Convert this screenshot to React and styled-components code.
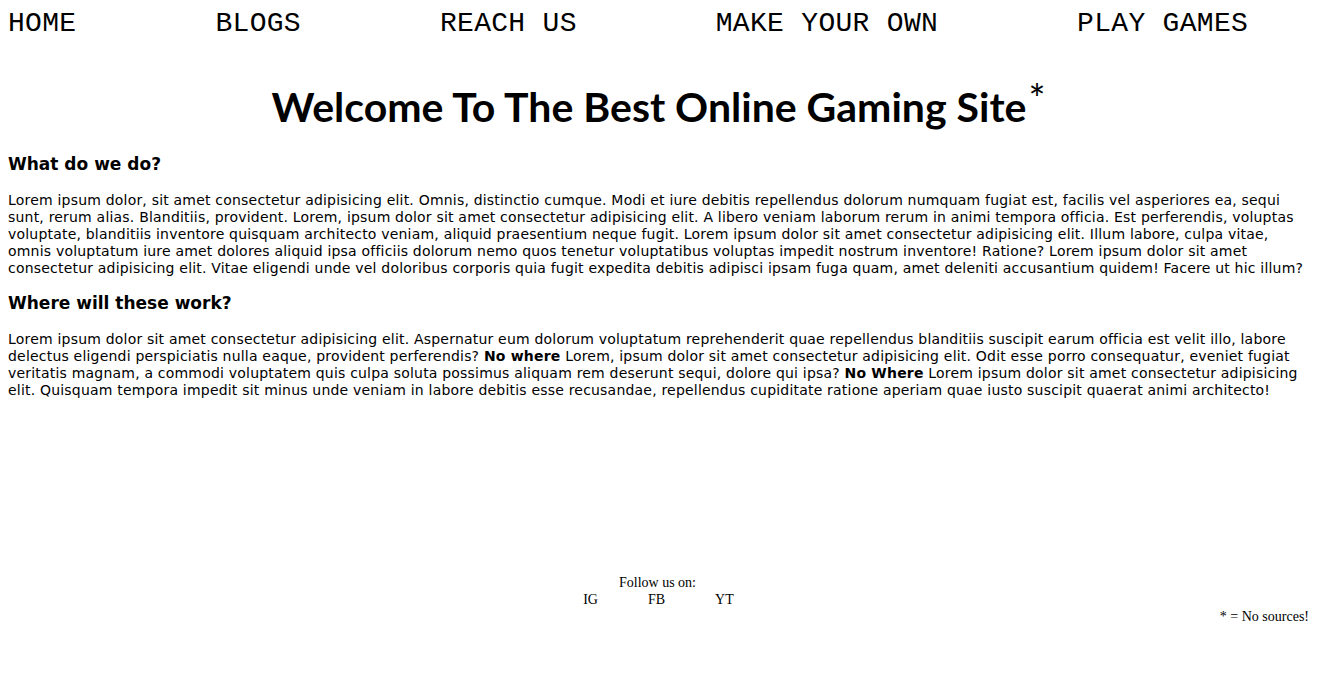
import React from "react";
import styled, { createGlobalStyle } from "styled-components";

const GlobalStyle = createGlobalStyle`
  body {
    margin: 8px;
    background: #fff;
    color: #000;
    font-family: "Liberation Serif", "Times New Roman", serif;
    font-size: 14px;
  }
`;

const Nav = styled.nav`
  display: flex;
  gap: 139px;
  margin-top: 2px;
`;

const NavLink = styled.a`
  font-family: "Liberation Mono", "Courier New", monospace;
  font-size: 28px;
  letter-spacing: 0.3px;
  color: #000;
  text-decoration: none;
  line-height: 28px;
`;

const Title = styled.h1`
  font-family: Lato, "Open Sans", sans-serif;
  font-weight: 700;
  font-size: 41px;
  text-align: center;
  margin: 45px 0 23px;
  line-height: 48px;

  sup {
    font-size: 40px;
    font-weight: 400;
    line-height: 0;
    margin-left: 2px;
    position: relative;
    top: 7px;
  }
`;

const Section = styled.section`
  font-family: "DejaVu Sans", Verdana, sans-serif;
  font-size: 14px;
  letter-spacing: 0.2px;
`;

const Heading = styled.h3`
  font-size: 17px;
  letter-spacing: 0;
  font-weight: 700;
  margin: 0 0 18px;
`;

const Text = styled.p`
  margin: 0 0 16px;
  line-height: 17px;
`;

const Footer = styled.footer`
  margin-top: 175px;
  font-size: 14px;
  line-height: 17px;
`;

const Follow = styled.div`
  text-align: center;
  padding-right: 2px;
`;

const Socials = styled.div`
  display: flex;
  justify-content: center;
  gap: 50px;
`;

const Social = styled.a`
  color: #000;
  text-decoration: none;
`;

const Note = styled.div`
  text-align: right;
`;

export default function App() {
  return (
    <>
      <GlobalStyle />
      <Nav>
        <NavLink href="#">HOME</NavLink>
        <NavLink href="#">BLOGS</NavLink>
        <NavLink href="#">REACH US</NavLink>
        <NavLink href="#">MAKE YOUR OWN</NavLink>
        <NavLink href="#">PLAY GAMES</NavLink>
      </Nav>
      <Title>
        Welcome To The Best Online Gaming Site<sup>*</sup>
      </Title>
      <Section>
        <Heading>What do we do?</Heading>
        <Text>
          Lorem ipsum dolor, sit amet consectetur adipisicing elit. Omnis, distinctio cumque. Modi et iure debitis
          repellendus dolorum numquam fugiat est, facilis vel asperiores ea, sequi sunt, rerum alias. Blanditiis,
          provident. Lorem, ipsum dolor sit amet consectetur adipisicing elit. A libero veniam laborum rerum in animi
          tempora officia. Est perferendis, voluptas voluptate, blanditiis inventore quisquam architecto veniam, aliquid
          praesentium neque fugit. Lorem ipsum dolor sit amet consectetur adipisicing elit. Illum labore, culpa vitae,
          omnis voluptatum iure amet dolores aliquid ipsa officiis dolorum nemo quos tenetur voluptatibus voluptas
          impedit nostrum inventore! Ratione? Lorem ipsum dolor sit amet consectetur adipisicing elit. Vitae eligendi
          unde vel doloribus corporis quia fugit expedita debitis adipisci ipsam fuga quam, amet deleniti accusantium
          quidem! Facere ut hic illum?
        </Text>
        <Heading>Where will these work?</Heading>
        <Text>
          Lorem ipsum dolor sit amet consectetur adipisicing elit. Aspernatur eum dolorum voluptatum reprehenderit quae
          repellendus blanditiis suscipit earum officia est velit illo, labore delectus eligendi perspiciatis nulla
          eaque, provident perferendis? <b>No where</b> Lorem, ipsum dolor sit amet consectetur adipisicing elit. Odit
          esse porro consequatur, eveniet fugiat veritatis magnam, a commodi voluptatem quis culpa soluta possimus
          aliquam rem deserunt sequi, dolore qui ipsa? <b>No Where</b> Lorem ipsum dolor sit amet consectetur
          adipisicing elit. Quisquam tempora impedit sit minus unde veniam in labore debitis esse recusandae,
          repellendus cupiditate ratione aperiam quae iusto suscipit quaerat animi architecto!
        </Text>
      </Section>
      <Footer>
        <Follow>Follow us on:</Follow>
        <Socials>
          <Social href="#">IG</Social>
          <Social href="#">FB</Social>
          <Social href="#">YT</Social>
        </Socials>
        <Note>* = No sources!</Note>
      </Footer>
    </>
  );
}
